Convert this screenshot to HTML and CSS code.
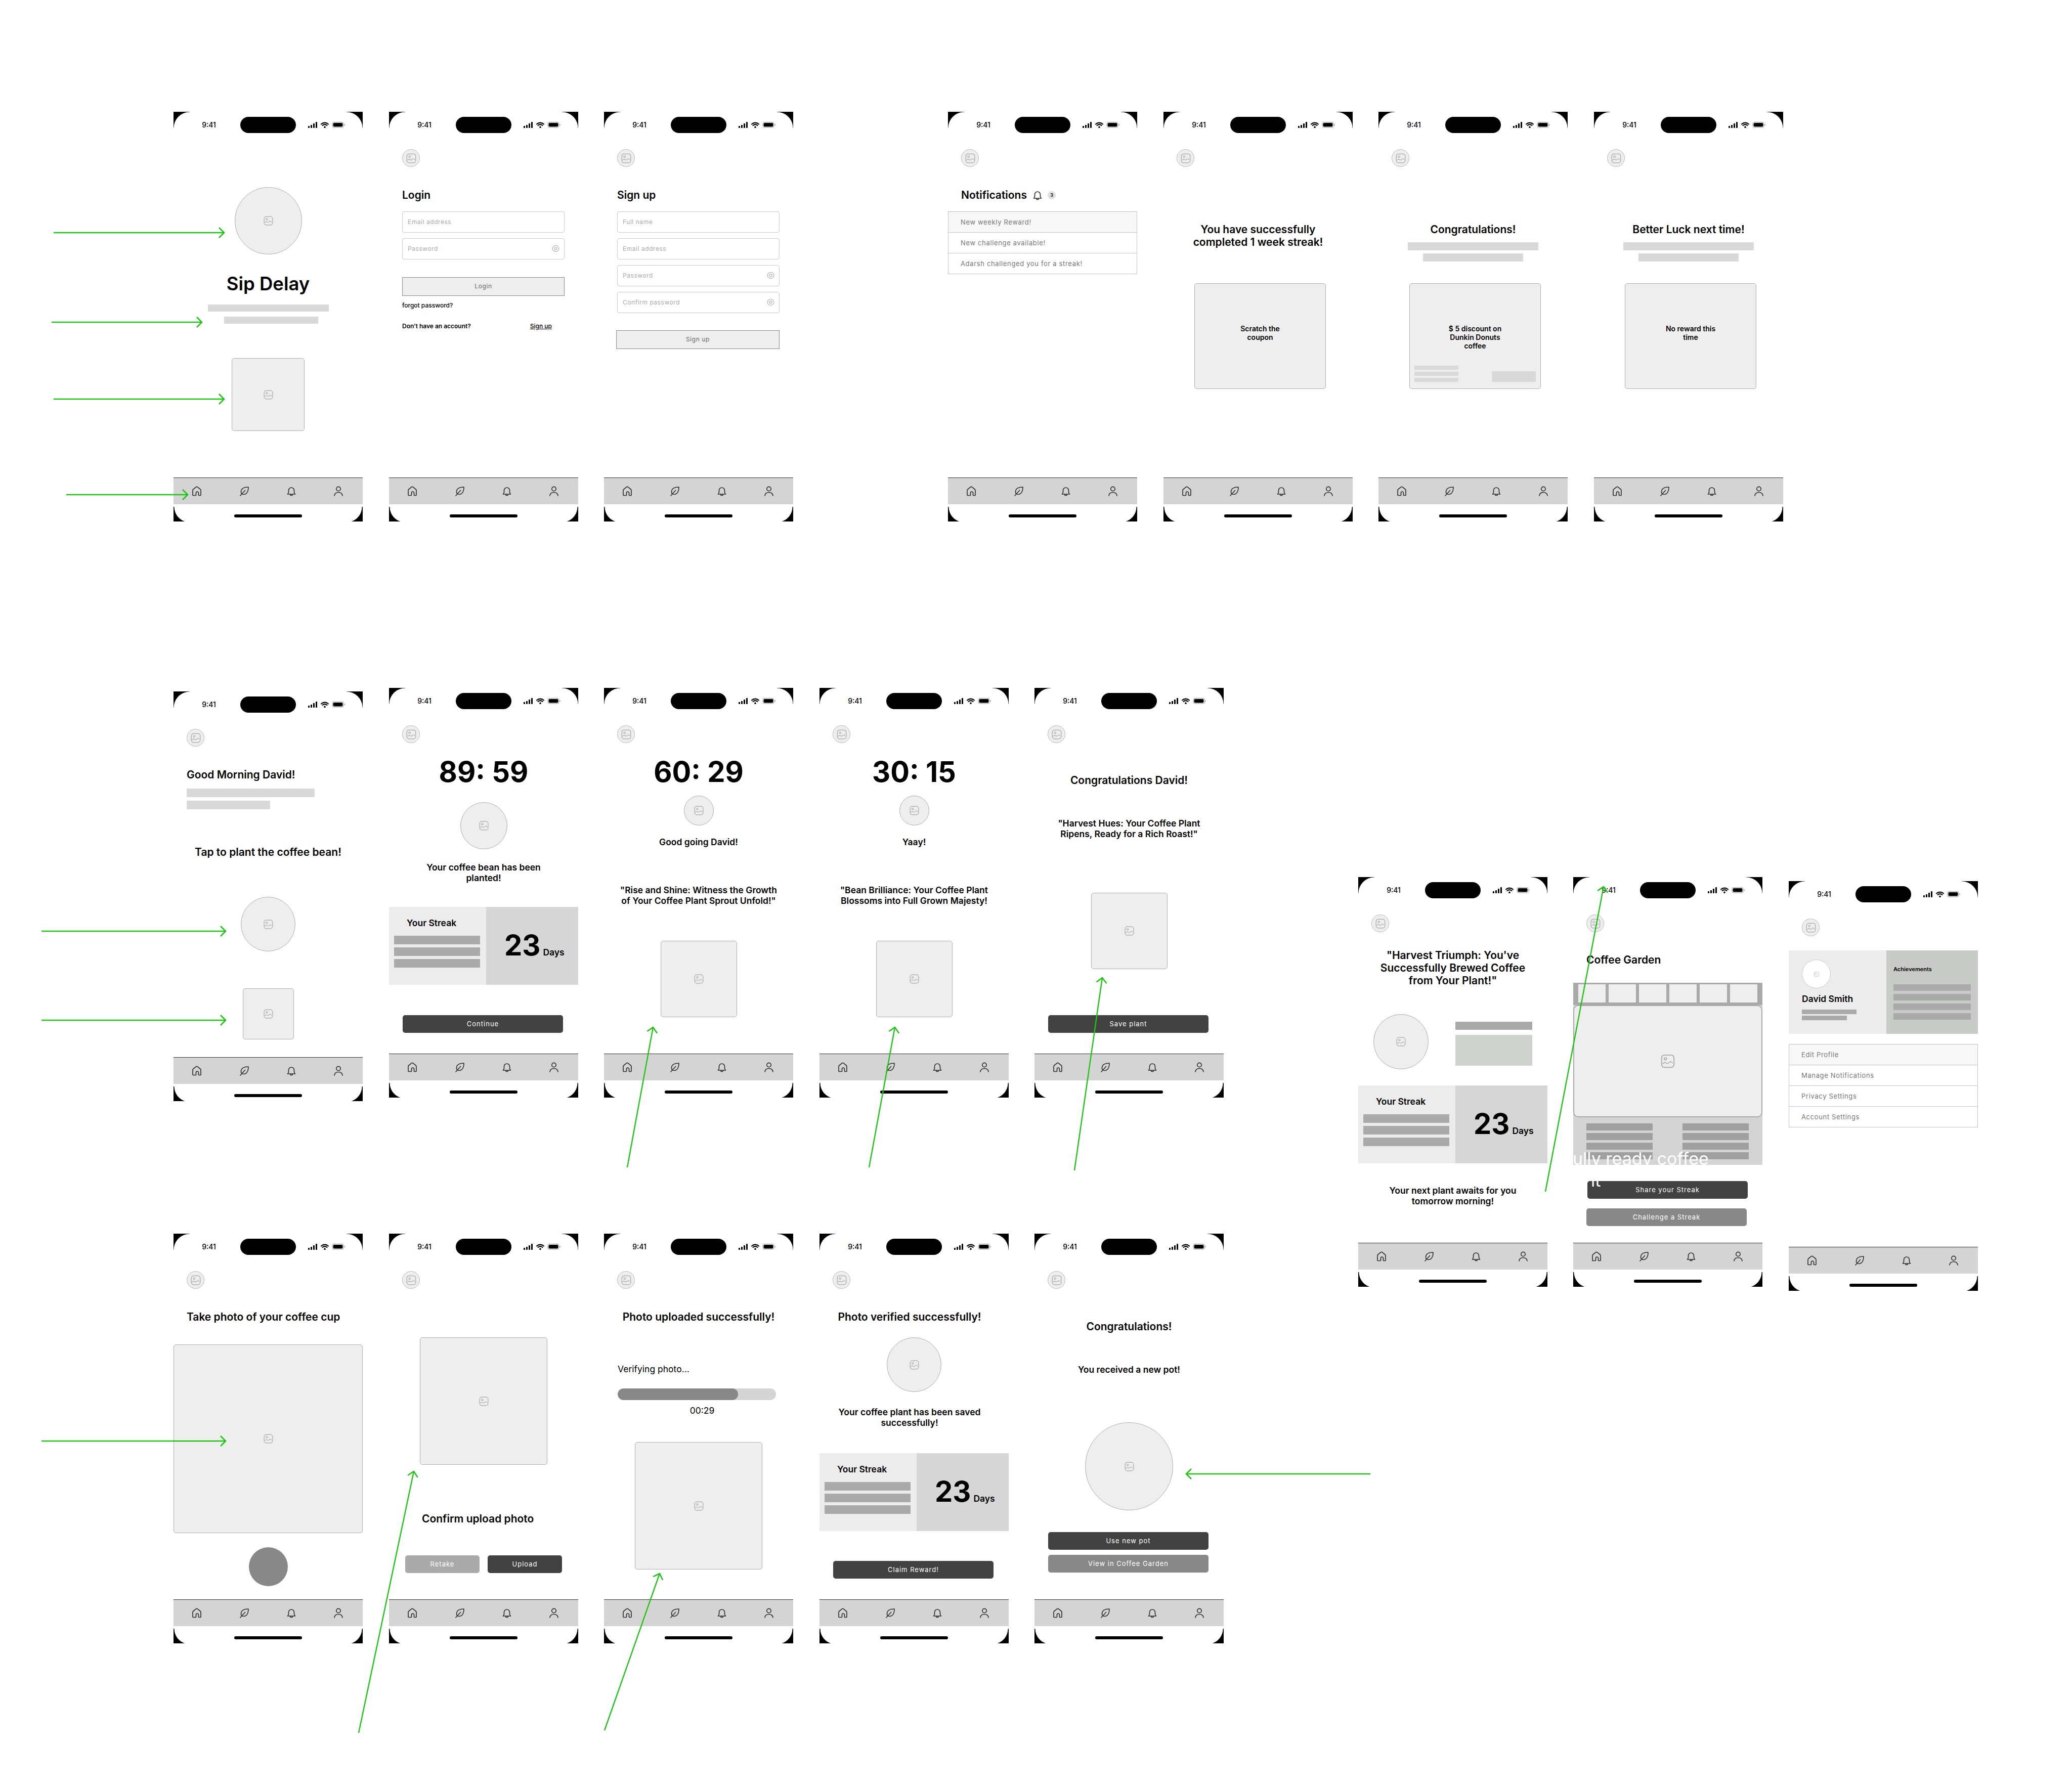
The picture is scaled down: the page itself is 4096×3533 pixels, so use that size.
FILE: index.html
```html
<!DOCTYPE html>
<html lang="en">
<head>
<meta charset="utf-8">
<title>Sip Delay wireframes</title>
<link rel="stylesheet" href="styles.css">
</head>
<body>
<svg class="defs" aria-hidden="true">
  <symbol id="img" viewBox="0 0 24 24"><rect x="1.5" y="1.5" width="21" height="21" rx="5" fill="none" stroke="currentColor" stroke-width="1.5"/><circle cx="8" cy="8" r="2.1" fill="none" stroke="currentColor" stroke-width="1.3"/><path d="M3.5 16.5c2-2.5 3.5-3 5.5-1.5s3.5 1.500 5-.5 3-2.500 6 .5" fill="none" stroke="currentColor" stroke-width="1.3" stroke-linecap="round"/></symbol>
  <symbol id="home" viewBox="0 0 24 24"><path d="M4 19.500v-9c0-.8.300-1.500.9-2l5.600-4.600c.9-.7 2.100-.7 3 0l5.600 4.600c.6.500.9 1.200.9 2v9a1 1 0 0 1-1 1h-2.500a1 1 0 0 1-1-1v-4a2.500 2.500 0 0 0-5 0v4a1 1 0 0 1-1 1H5a1 1 0 0 1-1-1z" fill="none" stroke="#333" stroke-width="1.700"/></symbol>
  <symbol id="leaf" viewBox="0 0 24 24"><path d="M20 4c-6.500 0-14 1-14.500 9-.2 3.300 1.800 5.500 4.500 5.500C17 18.500 20 12 20 4zM4 21l9.500-10.500" fill="none" stroke="#333" stroke-width="1.700" stroke-linecap="round" stroke-linejoin="round"/></symbol>
  <symbol id="bell" viewBox="0 0 24 24"><path d="M4.500 18c1-1 2-2 2-4v-3.500a5.500 5.500 0 0 1 11 0V14c0 2 1 3 2 4zM9.500 18a2.500 2.500 0 0 0 5 0" fill="none" stroke="#333" stroke-width="1.700" stroke-linejoin="round"/></symbol>
  <symbol id="user" viewBox="0 0 24 24"><circle cx="12" cy="7.500" r="4.200" fill="none" stroke="#333" stroke-width="1.700"/><path d="M4 21c.5-4.500 3.700-6.500 8-6.500s7.500 2 8 6.500" fill="none" stroke="#333" stroke-width="1.700" stroke-linecap="round"/></symbol>
  <symbol id="eye" viewBox="0 0 24 24"><path d="M12 3.500c5 0 9 4 9 8.500s-4 8.500-9 8.500-9-4-9-8.500 4-8.500 9-8.500z" fill="none" stroke="#aaa" stroke-width="1.600"/><circle cx="12" cy="12" r="3.500" fill="none" stroke="#aaa" stroke-width="1.600"/></symbol>
  <symbol id="sys" viewBox="0 0 75 14"><rect x="0" y="9" width="3" height="4" rx=".8"/><rect x="5" y="7" width="3" height="6" rx=".8"/><rect x="10" y="4" width="3" height="9" rx=".8"/><rect x="15" y="1" width="3" height="12" rx=".8"/><path d="M26 5.500c4-3.800 10-3.800 14 0M28.500 8c2.700-2.300 6.300-2.300 9 0" fill="none" stroke="#000" stroke-width="2.200" stroke-linecap="round"/><circle cx="33" cy="11.400" r="1.800"/><rect x="48" y="1.500" width="22" height="10.500" rx="3" fill="none" stroke="#999" stroke-width="1"/><rect x="49.500" y="3" width="19" height="7.500" rx="2"/><rect x="71.500" y="5" width="1.300" height="3.500" rx=".6" fill="#999"/></symbol>
  <symbol id="tabs" viewBox="0 0 374 24"><use href="#home" x="34" width="24" height="24"/><use href="#leaf" x="128" width="24" height="24"/><use href="#bell" x="221" width="24" height="24"/><use href="#user" x="314" width="24" height="24"/></symbol>
</svg>

<main class="canvas">

<section class="phone r1 c1">
  <div class="status"><span class="time">9:41</span><span class="island"></span><svg class="sys"><use href="#sys"/></svg></div>
  <div class="body">
    <div class="ph round s133 auto mt97"><svg class="ico"><use href="#img"/></svg></div>
    <h1 class="brand mt36">Sip Delay</h1>
    <div class="bar w239 h14 auto mt19"></div>
    <div class="bar w186 h14 ml100 mt10"></div>
    <div class="ph s144 auto mt68"><svg class="ico"><use href="#img"/></svg></div>
  </div>
  <svg class="tabs"><use href="#tabs"/></svg><div class="indicator"></div>
</section>

<section class="phone r1 c2">
  <div class="status"><span class="time">9:41</span><span class="island"></span><svg class="sys"><use href="#sys"/></svg></div>
  <div class="logo"><svg class="ico"><use href="#img"/></svg></div>
  <div class="body form">
    <h2 class="t20 mt44">Login</h2>
    <div class="field mt20">Email address</div>
    <div class="field mt11">Password<svg class="eye"><use href="#eye"/></svg></div>
    <div class="ghostbtn mt35">Login</div>
    <p class="small mt11">forgot password?</p>
    <div class="account mt25"><strong>Don’t have an account?</strong><u>Sign up</u></div>
  </div>
  <svg class="tabs"><use href="#tabs"/></svg><div class="indicator"></div>
</section>

<section class="phone r1 c3">
  <div class="status"><span class="time">9:41</span><span class="island"></span><svg class="sys"><use href="#sys"/></svg></div>
  <div class="logo"><svg class="ico"><use href="#img"/></svg></div>
  <div class="body form">
    <h2 class="t20 mt44">Sign up</h2>
    <div class="field mt20">Full name</div>
    <div class="field mt11">Email address</div>
    <div class="field mt11">Password<svg class="eye"><use href="#eye"/></svg></div>
    <div class="field mt11">Confirm password<svg class="eye"><use href="#eye"/></svg></div>
    <div class="ghostbtn mt34 shift">Sign up</div>
  </div>
  <svg class="tabs"><use href="#tabs"/></svg><div class="indicator"></div>
</section>

<section class="phone r1 c4">
  <div class="status"><span class="time">9:41</span><span class="island"></span><svg class="sys"><use href="#sys"/></svg></div>
  <div class="logo"><svg class="ico"><use href="#img"/></svg></div>
  <div class="body">
    <h2 class="t20 mt44 inset notif">Notifications<svg class="nbell"><use href="#bell"/></svg><span class="badge">3</span></h2>
    <ul class="list mt20"><li>New weekly Reward!</li><li>New challenge available!</li><li>Adarsh challenged you for a streak!</li></ul>
  </div>
  <svg class="tabs"><use href="#tabs"/></svg><div class="indicator"></div>
</section>

<section class="phone r1 c5">
  <div class="status"><span class="time">9:41</span><span class="island"></span><svg class="sys"><use href="#sys"/></svg></div>
  <div class="logo"><svg class="ico"><use href="#img"/></svg></div>
  <div class="body">
    <h2 class="t20 lh25 center mt111">You have successfully<br>completed 1 week streak!</h2>
    <div class="card mt69"><p class="cardtext">Scratch the<br>coupon</p></div>
  </div>
  <svg class="tabs"><use href="#tabs"/></svg><div class="indicator"></div>
</section>

<section class="phone r1 c6">
  <div class="status"><span class="time">9:41</span><span class="island"></span><svg class="sys"><use href="#sys"/></svg></div>
  <div class="logo"><svg class="ico"><use href="#img"/></svg></div>
  <div class="body">
    <h2 class="t20 lh25 center mt111">Congratulations!</h2>
    <div class="bar w258 h16 auto mt13"></div>
    <div class="bar w198 h16 auto mt6"></div>
    <div class="card mt43">
      <p class="cardtext">$ 5 discount on<br>Dunkin Donuts<br>coffee</p>
      <div class="cardfoot"><div class="footbars"><div class="bar h8"></div><div class="bar h8"></div><div class="bar h8"></div></div><div class="bar w87 h21"></div></div>
    </div>
  </div>
  <svg class="tabs"><use href="#tabs"/></svg><div class="indicator"></div>
</section>

<section class="phone r1 c7">
  <div class="status"><span class="time">9:41</span><span class="island"></span><svg class="sys"><use href="#sys"/></svg></div>
  <div class="logo"><svg class="ico"><use href="#img"/></svg></div>
  <div class="body">
    <h2 class="t20 lh25 center mt111">Better Luck next time!</h2>
    <div class="bar w258 h16 auto mt13"></div>
    <div class="bar w198 h16 auto mt6"></div>
    <div class="card mt43"><p class="cardtext">No reward this<br>time</p></div>
  </div>
  <svg class="tabs"><use href="#tabs"/></svg><div class="indicator"></div>
</section>

<section class="phone r2a c1">
  <div class="status"><span class="time">9:41</span><span class="island"></span><svg class="sys"><use href="#sys"/></svg></div>
  <div class="logo"><svg class="ico"><use href="#img"/></svg></div>
  <div class="body">
    <h2 class="t20 mt44 inset">Good Morning David!</h2>
    <div class="bar w253 h17 ml26 mt15"></div>
    <div class="bar w165 h17 ml26 mt7"></div>
    <p class="t20 center mt73">Tap to plant the coffee bean!</p>
    <div class="ph round s108 auto mt76"><svg class="ico"><use href="#img"/></svg></div>
    <div class="ph s101 auto mt73"><svg class="ico"><use href="#img"/></svg></div>
  </div>
  <svg class="tabs"><use href="#tabs"/></svg><div class="indicator"></div>
</section>

<section class="phone r2 c2">
  <div class="status"><span class="time">9:41</span><span class="island"></span><svg class="sys"><use href="#sys"/></svg></div>
  <div class="logo"><svg class="ico"><use href="#img"/></svg></div>
  <div class="body">
    <div class="timer mt27">89: 59</div>
    <div class="ph round s93 auto mt30"><svg class="ico"><use href="#img"/></svg></div>
    <p class="t16 center mt25">Your coffee bean has been<br>planted!</p>
    <div class="streak mt47">
      <div class="sleft"><h3 class="t16">Your Streak</h3><div class="sbars"><div class="bar dark h17"></div><div class="bar dark h17"></div><div class="bar dark h17"></div></div></div>
      <div class="sright"><span class="days">23</span><span class="t16">Days</span></div>
    </div>
    <div class="btn dim mt60">Continue</div>
  </div>
  <svg class="tabs"><use href="#tabs"/></svg><div class="indicator"></div>
</section>

<section class="phone r2 c3">
  <div class="status"><span class="time">9:41</span><span class="island"></span><svg class="sys"><use href="#sys"/></svg></div>
  <div class="logo"><svg class="ico"><use href="#img"/></svg></div>
  <div class="body">
    <div class="timer mt27">60: 29</div>
    <div class="ph round s59 auto mt17"><svg class="ico"><use href="#img"/></svg></div>
    <p class="t16 center mt22">Good going David!</p>
    <p class="t16 center mt74">"Rise and Shine: Witness the Growth<br>of Your Coffee Plant Sprout Unfold!"</p>
    <div class="ph s151 auto mt69"><svg class="ico"><use href="#img"/></svg></div>
  </div>
  <svg class="tabs"><use href="#tabs"/></svg><div class="indicator"></div>
</section>

<section class="phone r2 c4">
  <div class="status"><span class="time">9:41</span><span class="island"></span><svg class="sys"><use href="#sys"/></svg></div>
  <div class="logo"><svg class="ico"><use href="#img"/></svg></div>
  <div class="body">
    <div class="timer mt27">30: 15</div>
    <div class="ph round s59 auto mt17"><svg class="ico"><use href="#img"/></svg></div>
    <p class="t16 center mt22">Yaay!</p>
    <p class="t16 center mt74">"Bean Brilliance: Your Coffee Plant<br>Blossoms into Full Grown Majesty!</p>
    <div class="ph s151 auto mt69"><svg class="ico"><use href="#img"/></svg></div>
  </div>
  <svg class="tabs"><use href="#tabs"/></svg><div class="indicator"></div>
</section>

<section class="phone r2 c5">
  <div class="status"><span class="time">9:41</span><span class="island"></span><svg class="sys"><use href="#sys"/></svg></div>
  <div class="logo"><svg class="ico"><use href="#img"/></svg></div>
  <div class="body">
    <h2 class="t20 center mt62">Congratulations David!</h2>
    <p class="t16 center mt62">"Harvest Hues: Your Coffee Plant<br>Ripens, Ready for a Rich Roast!"</p>
    <div class="ph s151 auto mt106"><svg class="ico"><use href="#img"/></svg></div>
    <div class="btn dim mt91">Save plant</div>
  </div>
  <svg class="tabs"><use href="#tabs"/></svg><div class="indicator"></div>
</section>

<section class="phone r3 c1">
  <div class="status"><span class="time">9:41</span><span class="island"></span><svg class="sys"><use href="#sys"/></svg></div>
  <div class="logo"><svg class="ico"><use href="#img"/></svg></div>
  <div class="body">
    <h2 class="t20 mt44 inset">Take photo of your coffee cup</h2>
    <div class="ph wide mt42"><svg class="ico"><use href="#img"/></svg></div>
    <div class="shutter mt28"></div>
  </div>
  <svg class="tabs"><use href="#tabs"/></svg><div class="indicator"></div>
</section>

<section class="phone r3 c2">
  <div class="status"><span class="time">9:41</span><span class="island"></span><svg class="sys"><use href="#sys"/></svg></div>
  <div class="logo"><svg class="ico"><use href="#img"/></svg></div>
  <div class="body">
    <div class="ph s252 auto mt96"><svg class="ico"><use href="#img"/></svg></div>
    <h2 class="t20 mt95 ml65">Confirm upload photo</h2>
    <div class="pair mt60"><div class="btn soft half">Retake</div><div class="btn half">Upload</div></div>
  </div>
  <svg class="tabs"><use href="#tabs"/></svg><div class="indicator"></div>
</section>

<section class="phone r3 c3">
  <div class="status"><span class="time">9:41</span><span class="island"></span><svg class="sys"><use href="#sys"/></svg></div>
  <div class="logo"><svg class="ico"><use href="#img"/></svg></div>
  <div class="body">
    <h2 class="t20 center mt44">Photo uploaded successfully!</h2>
    <p class="plain ml27 mt80">Verifying photo...</p>
    <div class="progress mt28"><div class="fill"></div></div>
    <p class="plain center nudge mt10">00:29</p>
    <div class="ph s252 auto mt52"><svg class="ico"><use href="#img"/></svg></div>
  </div>
  <svg class="tabs"><use href="#tabs"/></svg><div class="indicator"></div>
</section>

<section class="phone r3 c4">
  <div class="status"><span class="time">9:41</span><span class="island"></span><svg class="sys"><use href="#sys"/></svg></div>
  <div class="logo"><svg class="ico"><use href="#img"/></svg></div>
  <div class="body">
    <h2 class="t20 center back mt44">Photo verified successfully!</h2>
    <div class="ph round s108 auto mt28"><svg class="ico"><use href="#img"/></svg></div>
    <p class="t16 center back mt29">Your coffee plant has been saved<br>successfully!</p>
    <div class="streak mt50">
      <div class="sleft"><h3 class="t16">Your Streak</h3><div class="sbars"><div class="bar dark h17"></div><div class="bar dark h17"></div><div class="bar dark h17"></div></div></div>
      <div class="sright"><span class="days">23</span><span class="t16">Days</span></div>
    </div>
    <div class="btn dim mt59">Claim Reward!</div>
  </div>
  <svg class="tabs"><use href="#tabs"/></svg><div class="indicator"></div>
</section>

<section class="phone r3 c5">
  <div class="status"><span class="time">9:41</span><span class="island"></span><svg class="sys"><use href="#sys"/></svg></div>
  <div class="logo"><svg class="ico"><use href="#img"/></svg></div>
  <div class="body">
    <h2 class="t20 center mt63">Congratulations!</h2>
    <p class="t16 center mt62">You received a new pot!</p>
    <div class="ph round s174 auto mt94"><svg class="ico"><use href="#img"/></svg></div>
    <div class="btn dim mt43">Use new pot</div>
    <div class="btn dim grey mt10">View in Coffee Garden</div>
  </div>
  <svg class="tabs"><use href="#tabs"/></svg><div class="indicator"></div>
</section>

<section class="phone rr ca">
  <div class="status"><span class="time">9:41</span><span class="island"></span><svg class="sys"><use href="#sys"/></svg></div>
  <div class="logo"><svg class="ico"><use href="#img"/></svg></div>
  <div class="body">
    <h2 class="t20 lh25 center mt33">"Harvest Triumph: You've<br>Successfully Brewed Coffee<br>from Your Plant!"</h2>
    <div class="trophy mt54">
      <div class="ph round s109"><svg class="ico"><use href="#img"/></svg></div>
      <div class="tcol"><div class="bar dark h16"></div><div class="tblock"></div></div>
    </div>
    <div class="streak mt32">
      <div class="sleft"><h3 class="t16">Your Streak</h3><div class="sbars"><div class="bar dark h17"></div><div class="bar dark h17"></div><div class="bar dark h17"></div></div></div>
      <div class="sright"><span class="days">23</span><span class="t16">Days</span></div>
    </div>
    <p class="t16 center mt43">Your next plant awaits for you<br>tomorrow morning!</p>
  </div>
  <svg class="tabs"><use href="#tabs"/></svg><div class="indicator"></div>
</section>

<section class="phone rr cb">
  <div class="status"><span class="time">9:41</span><span class="island"></span><svg class="sys"><use href="#sys"/></svg></div>
  <div class="logo"><svg class="ico"><use href="#img"/></svg></div>
  <div class="body">
    <h2 class="t20 mt43 inset">Coffee Garden</h2>
    <div class="strip mt33"><i></i><i></i><i></i><i></i><i></i><i></i></div>
    <div class="garden">
      <div class="gcard"><svg class="ico big"><use href="#img"/></svg></div>
      <div class="gbars">
        <div class="bar gbar"></div><div class="bar gbar"></div><div class="bar gbar"></div><div class="bar gbar"></div>
        <div class="bar gbar"></div><div class="bar gbar"></div><div class="bar gbar"></div><div class="bar gbar"></div>
      </div>
    </div>
    <div class="btn dim gbtn1 mt32">Share your Streak</div>
    <div class="btn grey gbtn2 mt19">Challenge a Streak</div>
  </div>
  <svg class="tabs"><use href="#tabs"/></svg><div class="indicator"></div>
  <div class="stray" aria-hidden="true"><span class="s1">Fully ready coffee</span><span class="s2">it</span></div>
</section>

<section class="phone rc cc">
  <div class="status"><span class="time">9:41</span><span class="island"></span><svg class="sys"><use href="#sys"/></svg></div>
  <div class="logo"><svg class="ico"><use href="#img"/></svg></div>
  <div class="body">
    <div class="profile mt28">
      <div class="pleft">
        <div class="avatar"><svg class="ico tiny"><use href="#img"/></svg></div>
        <h3 class="t16 mt10">David Smith</h3>
        <div class="bar dark w108 h9 mt11"></div>
        <div class="bar dark w89 h9 mt3"></div>
      </div>
      <div class="pright">
        <h4 class="ach">Achievements</h4>
        <div class="bar dark h13 mt23"></div><div class="bar dark h13 mt6"></div><div class="bar dark h13 mt6"></div><div class="bar dark h13 mt6"></div>
      </div>
    </div>
    <ul class="list mt20"><li>Edit Profile</li><li>Manage Notifications</li><li>Privacy Settings</li><li>Account Settings</li></ul>
  </div>
  <svg class="tabs"><use href="#tabs"/></svg><div class="indicator"></div>
</section>

<svg class="arrows" viewBox="0 0 4096 3533" aria-hidden="true">
  <defs><marker id="head" viewBox="-12 -12 14 24" markerWidth="14" markerHeight="24" markerUnits="userSpaceOnUse" refX="0" refY="0" orient="auto"><path d="M-10 -10L0 0L-10 10" fill="none" stroke="#1fc414" stroke-width="2.600"/></marker></defs>
  <g fill="none" stroke="#1fc414" stroke-width="2.400">
    <path marker-end="url(#head)" d="M106 460H443"/>
    <path marker-end="url(#head)" d="M102 637H399"/>
    <path marker-end="url(#head)" d="M106 789H443"/>
    <path marker-end="url(#head)" d="M131 978H371"/>
    <path marker-end="url(#head)" d="M82 1841H446"/>
    <path marker-end="url(#head)" d="M82 2017H446"/>
    <path marker-end="url(#head)" d="M1240 2308L1291 2031"/>
    <path marker-end="url(#head)" d="M1718 2308L1769 2031"/>
    <path marker-end="url(#head)" d="M2124 2314L2179 1933"/>
    <path marker-end="url(#head)" d="M82 2849H446"/>
    <path marker-end="url(#head)" d="M709 3426L818 2909"/>
    <path marker-end="url(#head)" d="M1195 3421L1304 3111"/>
    <path marker-end="url(#head)" d="M2709 2914H2345"/>
    <path marker-end="url(#head)" d="M3055 2356L3170 1753"/>
  </g>
</svg>

</main>
</body>
</html>
```

FILE: styles.css
```css
* { box-sizing: border-box; margin: 0; padding: 0; }
html, body { background: #fff; }
body { width: 4096px; height: 3533px; font-family: Inter, "Liberation Sans", sans-serif; color: #000; overflow: hidden; }
.defs { position: absolute; width: 0; height: 0; }
.canvas { position: relative; width: 4096px; height: 3533px; }

/* phones placed on the free canvas */
.phone { position: absolute; width: 374px; height: 810px; display: flex; flex-direction: column; background: #fff; }
.phone::before { content: ""; position: absolute; inset: 0; z-index: 3; pointer-events: none;
  background:
    radial-gradient(circle at 100% 100%, transparent 31px, #000 32px) 0 0 / 32px 32px no-repeat,
    radial-gradient(circle at 0 100%, transparent 31px, #000 32px) 100% 0 / 32px 32px no-repeat,
    radial-gradient(circle at 100% 0, transparent 30px, #000 31px) 0 100% / 32px 29px no-repeat,
    radial-gradient(circle at 0 0, transparent 30px, #000 31px) 100% 100% / 32px 29px no-repeat;
}
.r1 { top: 221px; } .r2a { top: 1367px; } .r2 { top: 1360px; } .r3 { top: 2439px; }
.rr { top: 1734px; } .rc { top: 1742px; }
.c1 { left: 343px; } .c2 { left: 769px; } .c3 { left: 1194px; } .c4 { left: 1620px; } .c5 { left: 2045px; }
.r1.c4 { left: 1874px; } .r1.c5 { left: 2300px; } .r1.c6 { left: 2725px; } .r1.c7 { left: 3151px; }
.ca { left: 2685px; } .cb { left: 3110px; } .cc { left: 3536px; }

/* status bar */
.status { flex: none; height: 52px; padding-top: 10px; display: flex; align-items: flex-start; }
.time { width: 30px; margin-left: 55px; height: 32px; line-height: 32px; text-align: center; font-size: 14px; font-weight: 500; }
.island { width: 110px; height: 32px; margin-left: 47px; border-radius: 16px; background: #000; }
.sys { width: 75px; height: 14px; margin: 9px 0 0 24px; }
.logo { flex: none; width: 35px; height: 35px; margin: 22px 0 0 26px; border-radius: 50%; border: 1.500px solid #bbb; background: #eee; display: flex; align-items: center; justify-content: center; }
.logo .ico { width: 20px; height: 20px; }
.ico { width: 19px; height: 19px; color: #a8a8a8; }
.ico.big { width: 28px; height: 28px; }
.ico.tiny { width: 10px; height: 10px; }
.body { flex: 1; min-height: 0; }
.tabs { flex: none; display: block; width: 374px; height: 53px; padding-top: 14px; padding-bottom: 14px; background: #d4d4d4; border-top: 1px solid #333; }
.indicator { flex: none; width: 134px; height: 6px; margin: 20px auto 8px; border-radius: 3px; background: #000; }

/* type */
.brand { font-size: 36.500px; line-height: 44px; font-weight: 600; text-align: center; }
.t20 { font-size: 21px; line-height: 24px; font-weight: 600; }
.lh25 { line-height: 25px; }
.t16 { font-size: 17.500px; line-height: 21px; font-weight: 600; }
.plain { font-size: 17.500px; line-height: 21px; font-weight: 400; }
.center { text-align: center; }
.back { position: relative; left: -9px; }
.nudge { position: relative; left: 7px; }
.inset { margin-left: 26px; }
.timer { font-size: 56px; line-height: 60px; font-weight: 700; text-align: center; }
.small { font-size: 12px; line-height: 16px; font-weight: 500; }

/* shapes */
.ph { display: flex; align-items: center; justify-content: center; background: #eee; border: 1.500px solid #aeaeae; border-radius: 5px; }
.round { border-radius: 50%; }
.auto { margin-left: auto; margin-right: auto; }
.s133 { width: 133px; height: 133px; } .s144 { width: 144px; height: 144px; }
.s108 { width: 108px; height: 108px; } .s101 { width: 101px; height: 101px; }
.s93 { width: 93px; height: 93px; } .s59 { width: 59px; height: 59px; }
.s151 { width: 151px; height: 151px; } .s252 { width: 252px; height: 252px; }
.s174 { width: 174px; height: 174px; } .s109 { width: 109px; height: 109px; flex: none; }
.wide { width: 374px; height: 373px; }
.shutter { width: 77px; height: 77px; margin-left: auto; margin-right: auto; border-radius: 50%; background: #888; }
.bar { background: #d9d9d9; }
.bar.dark { background: #aaa; }
.w239 { width: 239px; } .w186 { width: 186px; } .w258 { width: 258px; } .w198 { width: 198px; }
.w253 { width: 253px; } .w165 { width: 165px; } .w87 { width: 87px; } .w108 { width: 108px; } .w89 { width: 89px; }
.h8 { height: 8px; } .h9 { height: 9px; } .h13 { height: 13px; } .h14 { height: 14px; }
.h16 { height: 16px; } .h17 { height: 17px; } .h21 { height: 21px; }

/* forms */
.form { padding: 0 27px 0 26px; }
.field { position: relative; height: 42px; padding: 0 10px; line-height: 40px; border: 1.500px solid #c9c9c9; border-radius: 4px; font-size: 12px; letter-spacing: .55px; color: #a9a9a9; }
.eye { position: absolute; right: 8px; top: 11px; width: 17px; height: 17px; }
.ghostbtn { height: 37px; line-height: 34px; text-align: center; background: #eee; border: 1.500px solid #888; font-size: 12px; letter-spacing: .6px; color: #666; }
.shift { margin-left: -2px; }
.account { display: flex; justify-content: space-between; width: 296px; font-size: 12px; line-height: 16px; }
.account strong { font-weight: 600; }
.account u { font-weight: 500; }

/* notifications and settings */
.notif { display: flex; align-items: center; }
.nbell { width: 24px; height: 24px; margin-left: 9px; }
.badge { width: 16px; height: 16px; margin-left: 8px; border-radius: 50%; background: #e0e0e0; font-size: 9px; line-height: 16px; text-align: center; font-weight: 600; }
.list { list-style: none; border-top: 1px solid #bbb; }
.list li { height: 41px; padding-left: 24px; line-height: 40px; border: 1px solid #c4c4c4; border-top: 0; font-size: 13px; letter-spacing: .65px; color: #777; }
.list li:first-child { background: #f8f8f8; }

/* coupon card */
.card { display: flex; flex-direction: column; width: 260px; height: 209px; margin-left: 61px; padding-top: 80px; background: #eee; border: 1.500px solid #aeaeae; border-radius: 5px; }
.cardtext { font-size: 14px; line-height: 17px; font-weight: 600; text-align: center; }
.cardfoot { display: flex; justify-content: space-between; align-items: flex-end; margin-top: auto; padding: 0 9px 13px; }
.footbars { display: flex; flex-direction: column; gap: 4px; width: 87px; }

/* streak */
.streak { display: flex; height: 154px; }
.sleft { width: 192px; padding-top: 21px; background: #ececec; }
.sleft h3 { margin-left: 35px; }
.sbars { display: flex; flex-direction: column; gap: 6px; width: 170px; margin: 15px 0 0 10px; }
.sright { flex: 1; display: flex; align-items: baseline; gap: 5px; padding: 46px 0 0 36px; background: #d6d6d6; }
.days { font-size: 56px; line-height: 60px; font-weight: 700; }

/* buttons */
.btn { width: 317px; height: 35px; margin-left: 27px; line-height: 35px; text-align: center; border-radius: 5px; background: #424242; color: #fff; font-size: 13px; letter-spacing: 1px; }
.btn.grey { background: #888; }
.btn.soft { background: #aaa; }
.btn.half { width: 147px; margin-left: 0; }
.pair { display: flex; gap: 16px; margin-left: 32px; }
.gbtn1 { margin-left: 28px; }
.gbtn2 { margin-left: 26px; }

/* progress */
.progress { width: 313px; height: 23px; margin-left: 27px; border-radius: 12px; background: #d4d4d4; overflow: hidden; }
.fill { width: 238px; height: 23px; border-radius: 12px; background: #888; }

/* trophy */
.trophy { display: flex; margin-left: 30px; }
.tcol { width: 152px; margin: 15px 0 0 53px; }
.tblock { height: 61px; margin-top: 10px; background: #d0d2d0; }

/* garden */
.strip { display: flex; gap: 6px; height: 44px; padding: 3px 10px 0; background: #aaa; }
.strip i { flex: 1; height: 36px; background: #eee; }
.garden { height: 316px; background: #d4d4d4; }
.gcard { display: flex; align-items: center; justify-content: center; height: 222px; background: #eee; border: 2px solid #aaa; border-radius: 10px; }
.gbars { display: grid; grid-template-columns: 131px 131px; grid-auto-flow: column; grid-template-rows: repeat(4, 14px); gap: 5px 59px; padding: 12px 0 0 26px; }
.gbar { background: #a0a0a0; }
.stray { position: absolute; left: 0; top: 535px; width: 374px; height: 90px; overflow: hidden; z-index: 2; color: #fff; font-size: 34px; line-height: 43px; pointer-events: none; }
.stray .s1 { position: absolute; left: -20px; top: 0; white-space: nowrap; }
.stray .s2 { position: absolute; left: 35px; top: 43px; }

/* profile */
.profile { display: flex; height: 165px; }
.pleft { width: 193px; padding: 18px 0 0 26px; background: #ececec; }
.avatar { display: flex; align-items: center; justify-content: center; width: 57px; height: 57px; border-radius: 50%; background: #fff; border: 1px solid #ccc; }
.pright { flex: 1; padding: 30px 14px 0; background: #c9cbc9; }
.ach { font-size: 11px; line-height: 14px; font-weight: 600; }

/* arrows */
.arrows { position: absolute; inset: 0; width: 4096px; height: 3533px; z-index: 5; pointer-events: none; }

/* spacing */
.ml26 { margin-left: 26px; } .ml27 { margin-left: 27px; } .ml65 { margin-left: 65px; } .ml100 { margin-left: 100px; }
.mt3 { margin-top: 3px; } .mt6 { margin-top: 6px; } .mt7 { margin-top: 7px; } .mt10 { margin-top: 10px; } .mt11 { margin-top: 11px; }
.mt13 { margin-top: 13px; } .mt15 { margin-top: 15px; } .mt17 { margin-top: 17px; } .mt19 { margin-top: 19px; }
.mt20 { margin-top: 20px; } .mt22 { margin-top: 22px; } .mt23 { margin-top: 23px; } .mt25 { margin-top: 25px; } .mt27 { margin-top: 27px; }
.mt28 { margin-top: 28px; } .mt29 { margin-top: 29px; } .mt30 { margin-top: 30px; } .mt32 { margin-top: 32px; } .mt33 { margin-top: 33px; }
.mt34 { margin-top: 34px; } .mt35 { margin-top: 35px; } .mt36 { margin-top: 36px; } .mt43 { margin-top: 43px; } .mt42 { margin-top: 42px; }
.mt44 { margin-top: 44px; } .mt47 { margin-top: 47px; } .mt50 { margin-top: 50px; } .mt52 { margin-top: 52px; } .mt54 { margin-top: 54px; }
.mt59 { margin-top: 59px; } .mt60 { margin-top: 60px; } .mt62 { margin-top: 62px; } .mt63 { margin-top: 63px; } .mt68 { margin-top: 68px; }
.mt69 { margin-top: 69px; } .mt73 { margin-top: 73px; } .mt74 { margin-top: 74px; } .mt76 { margin-top: 76px; } .mt80 { margin-top: 80px; }
.mt91 { margin-top: 91px; } .mt94 { margin-top: 94px; } .mt95 { margin-top: 95px; } .mt96 { margin-top: 96px; } .mt97 { margin-top: 97px; }
.mt106 { margin-top: 106px; } .mt111 { margin-top: 111px; }
```
